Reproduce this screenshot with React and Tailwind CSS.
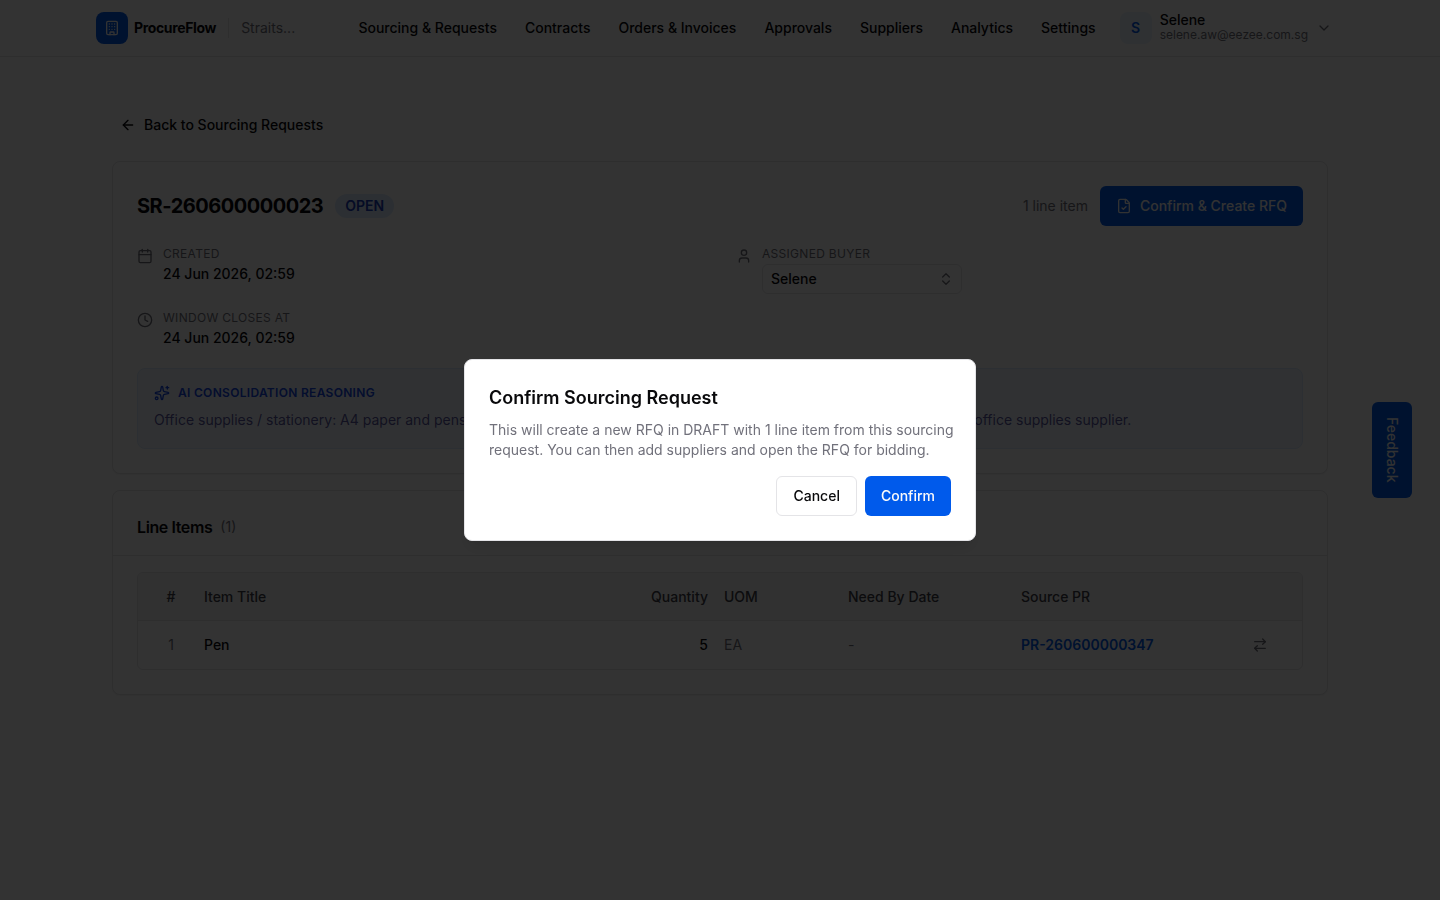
import React, { useState } from "react";
import {
  ArrowLeft,
  ArrowRightLeft,
  Building,
  Calendar,
  ChevronDown,
  ChevronsUpDown,
  Clock,
  FileCheck,
  Sparkles,
  User,
} from "lucide-react";

const NAV_LINKS = [
  "Sourcing & Requests",
  "Contracts",
  "Orders & Invoices",
  "Approvals",
  "Suppliers",
  "Analytics",
  "Settings",
];

const LINE_ITEMS = [
  {
    id: 1,
    title: "Pen",
    quantity: 5,
    uom: "EA",
    needBy: "-",
    sourcePr: "PR-260600000347",
  },
];

const Header = () => {
  return (
    <header className="border-b border-zinc-200 bg-white">
      <div className="mx-auto flex h-14 max-w-7xl items-center px-4">
        <a href="#home" className="flex items-center gap-1.5">
          <span className="flex size-8 items-center justify-center rounded-lg bg-[#005aeb] text-white">
            <Building size={16} />
          </span>
          <span className="text-sm font-bold tracking-tight">ProcureFlow</span>
        </a>
        <span className="mx-3 h-5 w-px bg-zinc-200" />
        <span className="text-sm text-zinc-500">Straits...</span>

        <nav className="ml-auto flex items-center gap-1">
          {NAV_LINKS.map((link) => (
            <a
              key={link}
              href="#nav"
              className="px-3 py-2 text-sm font-medium whitespace-nowrap"
            >
              {link}
            </a>
          ))}
        </nav>

        <button className="flex items-center gap-2 px-3 text-left">
          <span className="flex size-8 items-center justify-center rounded-lg bg-[#eaf2ff] text-sm font-semibold text-[#005aeb]">
            S
          </span>
          <span className="flex flex-col">
            <span className="text-sm leading-none font-medium">Selene</span>
            <span className="text-xs leading-4 text-zinc-500">
              selene.aw@eezee.com.sg
            </span>
          </span>
          <ChevronDown size={16} className="text-zinc-500" />
        </button>
      </div>
    </header>
  );
};

const Field = ({ icon: Icon, label, htmlFor, children }) => {
  return (
    <div className="flex items-start gap-2.5">
      <Icon size={16} className="mt-0.5 text-zinc-500" />
      <div className="flex flex-col gap-0.5">
        {htmlFor ? (
          <label
            htmlFor={htmlFor}
            className="text-xs tracking-wide text-zinc-500 uppercase"
          >
            {label}
          </label>
        ) : (
          <p className="text-xs tracking-wide text-zinc-500 uppercase">
            {label}
          </p>
        )}
        {children}
      </div>
    </div>
  );
};

const RequestCard = ({ onConfirm }) => {
  const [buyer, setBuyer] = useState("Selene");

  return (
    <section className="flex flex-col gap-5 rounded-lg border border-zinc-200 bg-white p-6 shadow-xs">
      <div className="flex items-center justify-between">
        <div className="flex items-center gap-3">
          <h1 className="text-xl font-bold tracking-tight">SR-260600000023</h1>
          <span className="rounded-full bg-blue-100 px-2.5 py-0.5 text-sm font-semibold text-blue-800">
            OPEN
          </span>
        </div>
        <div className="flex items-center gap-3">
          <span className="text-sm text-zinc-500">1 line item</span>
          <button
            onClick={onConfirm}
            className="flex h-10 items-center gap-2 rounded-md bg-[#005aeb] px-4 text-sm font-medium text-zinc-50"
          >
            <FileCheck size={16} />
            Confirm &amp; Create RFQ
          </button>
        </div>
      </div>

      <div className="grid grid-cols-2 gap-x-8 gap-y-4">
        <Field icon={Calendar} label="Created">
          <p className="text-sm font-medium">24 Jun 2026, 02:59</p>
        </Field>
        <Field icon={User} label="Assigned Buyer" htmlFor="buyer">
          <div className="relative">
            <select
              id="buyer"
              value={buyer}
              onChange={(e) => setBuyer(e.target.value)}
              className="block h-[30px] w-[200px] appearance-none rounded-md border border-zinc-200 bg-white px-2 text-sm font-medium"
            >
              <option>Selene</option>
            </select>
            <ChevronsUpDown
              size={16}
              className="pointer-events-none absolute top-[7px] right-2 text-zinc-500"
            />
          </div>
        </Field>
        <Field icon={Clock} label="Window closes at">
          <p className="text-sm font-medium">24 Jun 2026, 02:59</p>
        </Field>
      </div>

      <div className="rounded-lg border border-blue-100 bg-blue-50 p-4">
        <div className="mb-2 flex items-center gap-2 text-blue-700">
          <Sparkles size={16} />
          <h2 className="text-xs font-semibold tracking-wide uppercase">
            AI Consolidation Reasoning
          </h2>
        </div>
        <p className="text-sm leading-relaxed text-indigo-900/80">
          Office supplies / stationery: A4 paper and pens are purchased together
          and can be consolidated into one RFQ from a single office supplies
          supplier.
        </p>
      </div>
    </section>
  );
};

const LineItemsCard = () => {
  return (
    <section className="rounded-lg border border-zinc-200 bg-white shadow-xs">
      <div className="flex items-center gap-2 border-b border-zinc-200 px-6 pt-6 pb-4">
        <h2 className="text-base font-semibold tracking-tight">Line Items</h2>
        <span className="text-sm text-zinc-500">(1)</span>
      </div>
      <div className="px-6 pt-4 pb-6">
        <div className="overflow-hidden rounded-md border border-zinc-200">
          <table className="w-full table-fixed text-left text-sm">
            <thead className="bg-zinc-100">
              <tr className="h-12 border-b border-zinc-200 text-zinc-700">
                <th className="w-[58px] pr-2 pl-4 text-center font-medium">
                  #
                </th>
                <th className="px-2 font-medium">Item Title</th>
                <th className="w-[116px] px-2 text-right font-medium">
                  Quantity
                </th>
                <th className="w-[124px] px-2 font-medium">UOM</th>
                <th className="w-[173px] px-2 font-medium">Need By Date</th>
                <th className="w-[213px] px-2 font-medium">Source PR</th>
                <th className="w-[76px] pr-4 pl-2" />
              </tr>
            </thead>
            <tbody>
              {LINE_ITEMS.map((item) => (
                <tr key={item.id} className="h-12">
                  <td className="pr-2 pl-4 text-center text-zinc-500">
                    {item.id}
                  </td>
                  <td className="px-2 font-medium">{item.title}</td>
                  <td className="px-2 text-right font-medium">
                    {item.quantity}
                  </td>
                  <td className="px-2 text-zinc-500">{item.uom}</td>
                  <td className="px-2 text-zinc-500">{item.needBy}</td>
                  <td className="px-2">
                    <a href="#pr" className="font-semibold text-[#005aeb]">
                      {item.sourcePr}
                    </a>
                  </td>
                  <td className="pr-4 pl-2">
                    <button
                      aria-label="Move item"
                      className="mx-auto flex size-8 items-center justify-center text-zinc-500"
                    >
                      <ArrowRightLeft size={16} />
                    </button>
                  </td>
                </tr>
              ))}
            </tbody>
          </table>
        </div>
      </div>
    </section>
  );
};

const ConfirmDialog = ({ onClose }) => {
  return (
    <div className="fixed inset-0 z-50 flex items-center justify-center bg-black/80">
      <div
        role="dialog"
        aria-modal="true"
        aria-labelledby="dialog-title"
        className="flex w-full max-w-lg flex-col gap-4 rounded-lg border border-zinc-200 bg-white p-6 shadow-lg"
      >
        <div className="flex flex-col gap-2">
          <h2 id="dialog-title" className="text-lg font-semibold">
            Confirm Sourcing Request
          </h2>
          <p className="text-sm text-zinc-500 sm:whitespace-nowrap">
            This will create a new RFQ in DRAFT with 1 line item from this
            sourcing <br />
            request. You can then add suppliers and open the RFQ for bidding.
          </p>
        </div>
        <div className="flex justify-end gap-2">
          <button
            onClick={onClose}
            className="h-10 rounded-md border border-zinc-200 bg-white px-4 text-sm font-medium"
          >
            Cancel
          </button>
          <button
            onClick={onClose}
            className="h-10 rounded-md bg-[#005aeb] px-4 text-sm font-medium text-zinc-50"
          >
            Confirm
          </button>
        </div>
      </div>
    </div>
  );
};

const App = () => {
  const [open, setOpen] = useState(true);

  return (
    <div className="min-h-screen bg-white font-['Inter',sans-serif] text-zinc-950">
      <Header />
      <main className="mx-auto flex max-w-7xl flex-col gap-4 px-8 pt-12">
        <a
          href="#back"
          className="flex h-10 items-center gap-2 self-start px-2 text-sm font-medium"
        >
          <ArrowLeft size={16} />
          Back to Sourcing Requests
        </a>
        <RequestCard onConfirm={() => setOpen(true)} />
        <LineItemsCard />
      </main>

      <button className="fixed top-1/2 right-7 flex h-24 w-10 -translate-y-1/2 items-center justify-center rounded-md bg-[#005aeb] text-sm font-medium text-zinc-50 [writing-mode:vertical-rl]">
        Feedback
      </button>

      {open && <ConfirmDialog onClose={() => setOpen(false)} />}
    </div>
  );
};

export default App;
